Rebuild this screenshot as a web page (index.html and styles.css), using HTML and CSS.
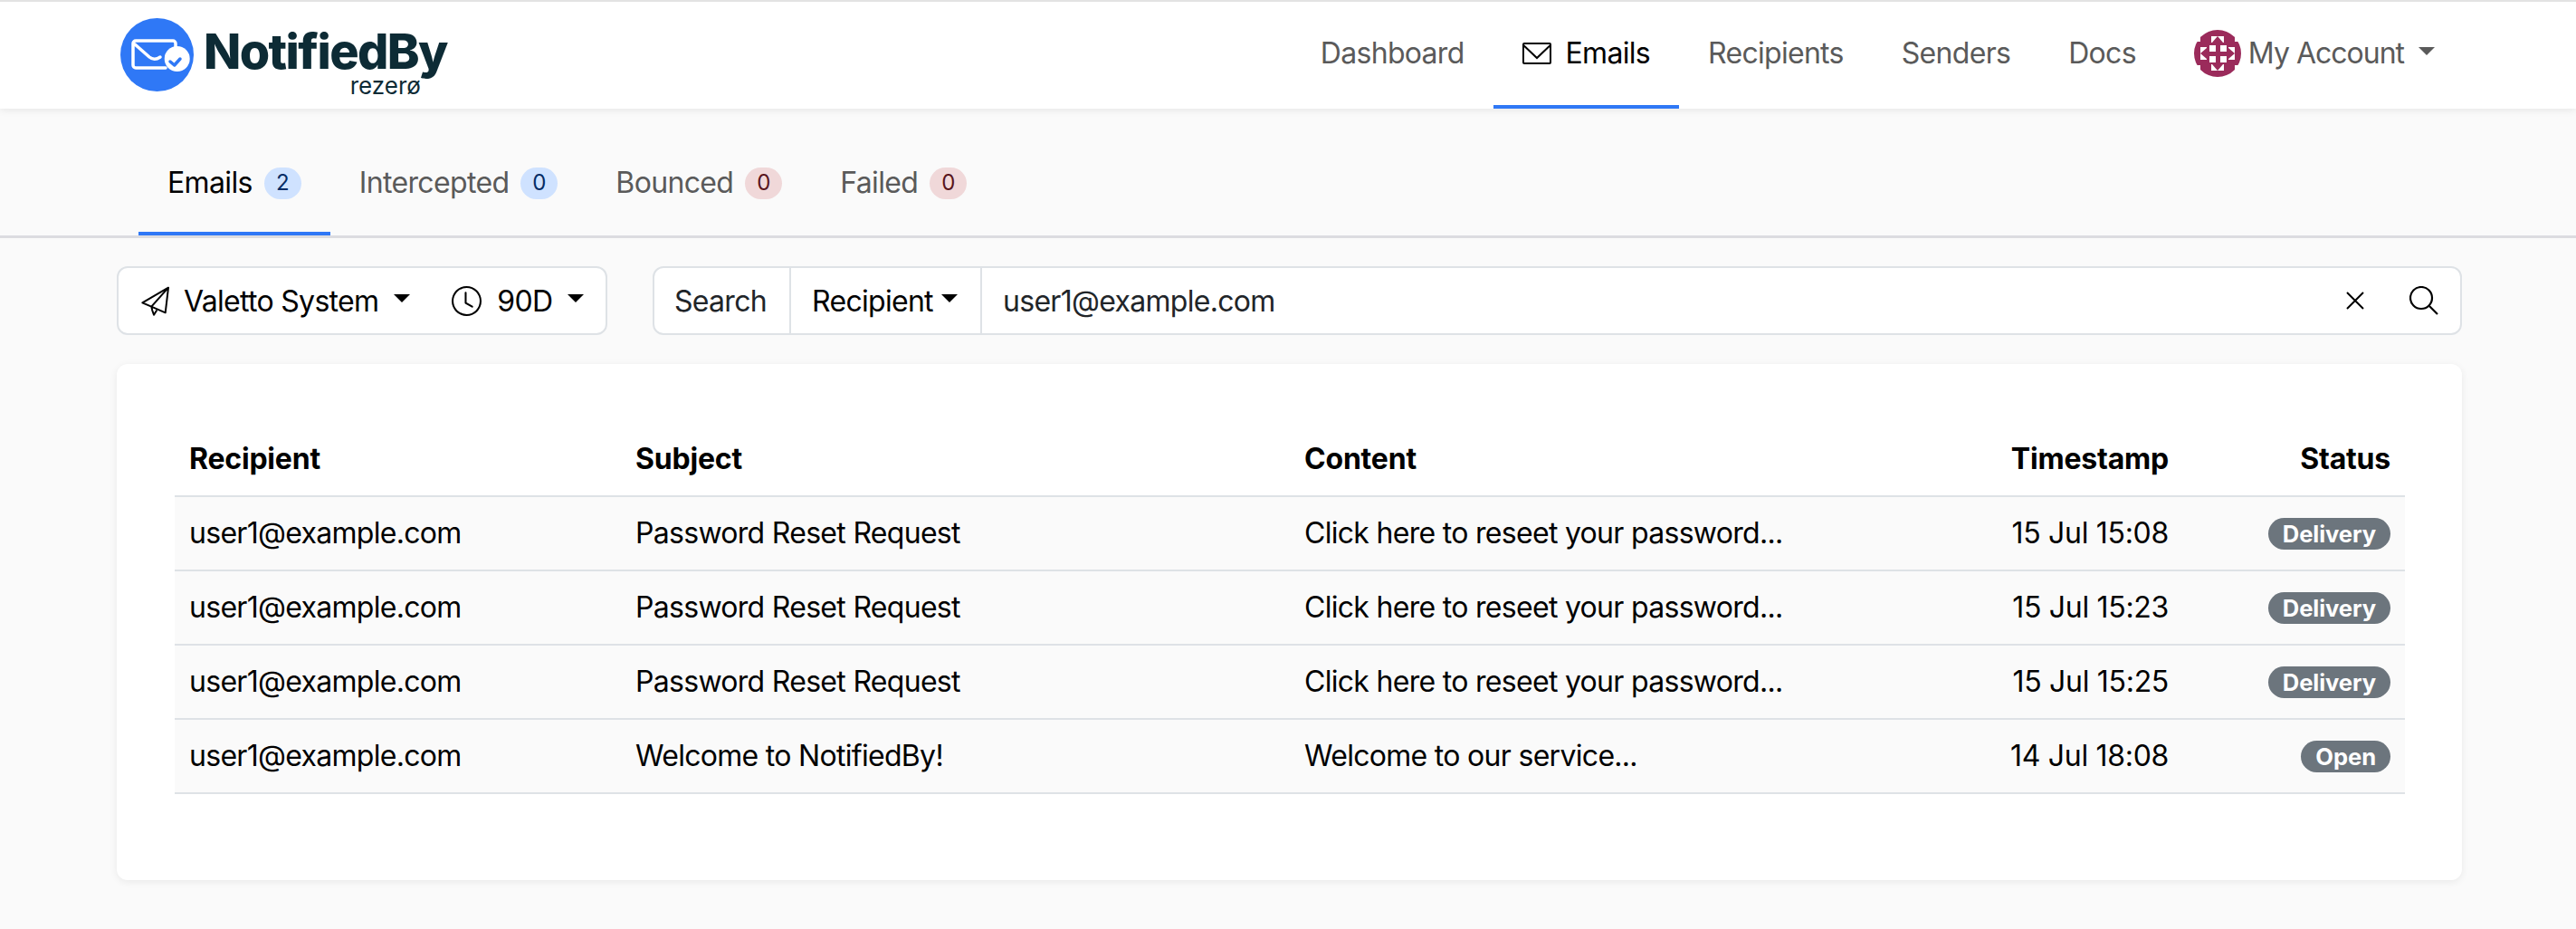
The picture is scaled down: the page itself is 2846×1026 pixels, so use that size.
FILE: index.html
```html
<!DOCTYPE html>
<html lang="en">
<head>
<meta charset="utf-8">
<title>NotifiedBy</title>
<link rel="stylesheet" href="styles.css">
</head>
<body>
<header class="navbar">
  <a class="brand">
    <svg class="brand-mark" viewBox="0 0 81 81">
      <circle cx="40.5" cy="40.5" r="40.5" fill="#2f78f6"/>
      <path d="M50 55H17a3 3 0 0 1-3-3V28a3 3 0 0 1 3-3h41a3 3 0 0 1 3 3v9M15.500 28.500L32 43c3 2.500 7 3.500 12 0" fill="none" stroke="#fff" stroke-width="3.500" stroke-linecap="round"/>
      <circle cx="62.700" cy="45" r="14" fill="#fff"/>
      <path d="M55 48l4.700 4 6.300-7" fill="none" stroke="#2f78f6" stroke-width="3.500" stroke-linecap="round" stroke-linejoin="round"/>
    </svg>
    <span class="brand-text">
      <span class="brand-name">NotifiedBy</span>
      <span class="brand-sub">rezerø</span>
    </span>
  </a>
  <nav class="nav-links">
    <a class="nav-link">Dashboard</a>
    <a class="nav-link nav-link-active">
      <svg class="nav-icon" viewBox="0 0 32 24" fill="none" stroke="currentColor" stroke-width="2"><rect x="1" y="1" width="30" height="22" rx="1"/><path d="M1.500 3.300L16 17 30.500 3.300"/></svg>
      Emails
    </a>
    <a class="nav-link">Recipients</a>
    <a class="nav-link">Senders</a>
    <a class="nav-link">Docs</a>
    <a class="nav-link nav-account">
      <svg class="avatar" viewBox="0 0 52 52">
        <circle cx="26" cy="26" r="26" fill="#9b2b5b"/>
        <g fill="#fff">
          <path d="M0 0h13v3H7v10H0zM52 0H39v3h6v10h7zM0 52h13v-3H7V39H0zM52 52H39v-3h6V39h7z"/>
          <rect x="17" y="17" width="7" height="7"/><rect x="29" y="17" width="7" height="7"/>
          <rect x="17" y="29" width="7" height="7"/><rect x="29" y="29" width="7" height="7"/>
          <rect x="19" y="7" width="14" height="7"/><rect x="19" y="38" width="14" height="7"/>
          <rect x="7" y="19" width="7" height="14"/><rect x="38" y="19" width="7" height="14"/>
        </g>
        <path d="M26 7l6 7H20zM26 45l6-7H20zM7 26l7-6v12zM45 26l-7-6v12z" fill="#9b2b5b"/>
      </svg>
      <span class="account-name">My Account</span><span class="caret caret-account"></span>
    </a>
  </nav>
</header>

<div class="tabs">
  <a class="tab tab-active">Emails<span class="count count-blue">2</span></a>
  <a class="tab">Intercepted<span class="count count-blue">0</span></a>
  <a class="tab">Bounced<span class="count count-red">0</span></a>
  <a class="tab">Failed<span class="count count-red">0</span></a>
</div>

<main class="content">
  <div class="toolbar">
    <div class="filters">
      <span class="filter">
        <svg class="plane-icon" viewBox="0 0 33 36" fill="none" stroke="#000" stroke-width="2" stroke-linejoin="round"><path d="M31 2.700L2.300 19.300l10 4.400 15.400 6.600zM31 2.700L12.300 23.700l1 4.300 1.700 4.700 3.300-5.200"/></svg>
        Valetto System<span class="caret"></span>
      </span>
      <span class="filter filter-time">
        <svg class="filter-icon" viewBox="0 0 16 16" fill="#000"><path d="M8 3.500a.5.5 0 0 0-1 0V9a.5.5 0 0 0 .252.434l3.500 2a.5.5 0 0 0 .496-.868L8 8.710z"/><path d="M8 16A8 8 0 1 0 8 0a8 8 0 0 0 0 16m7-8A7 7 0 1 1 1 8a7 7 0 0 1 14 0"/></svg>
        90D<span class="caret"></span>
      </span>
    </div>
    <div class="search">
      <span class="search-label">Search</span>
      <span class="search-field">Recipient<span class="caret caret-tight"></span></span>
      <span class="search-value">user1@example.com</span>
      <svg class="icon-clear" viewBox="0 0 20 20" fill="none" stroke="#000" stroke-width="2"><path d="M1 1l18 18M19 1L1 19"/></svg>
      <svg class="icon-search" viewBox="0 0 32 32" fill="none" stroke="#000" stroke-width="2.200"><circle cx="13" cy="13" r="12"/><path d="M22 22l9 9"/></svg>
    </div>
  </div>

  <section class="card">
    <table class="table">
      <colgroup>
        <col class="col-recipient"><col class="col-subject"><col class="col-content"><col class="col-time"><col class="col-status">
      </colgroup>
      <thead>
        <tr><th>Recipient</th><th>Subject</th><th>Content</th><th class="end">Timestamp</th><th class="end">Status</th></tr>
      </thead>
      <tbody>
        <tr><td>user1@example.com</td><td>Password Reset Request</td><td>Click here to reseet your password...</td><td class="end time">15 Jul 15:08</td><td class="end"><span class="status">Delivery</span></td></tr>
        <tr><td>user1@example.com</td><td>Password Reset Request</td><td>Click here to reseet your password...</td><td class="end time">15 Jul 15:23</td><td class="end"><span class="status">Delivery</span></td></tr>
        <tr><td>user1@example.com</td><td>Password Reset Request</td><td>Click here to reseet your password...</td><td class="end time">15 Jul 15:25</td><td class="end"><span class="status">Delivery</span></td></tr>
        <tr><td>user1@example.com</td><td>Welcome to NotifiedBy!</td><td>Welcome to our service...</td><td class="end time">14 Jul 18:08</td><td class="end"><span class="status">Open</span></td></tr>
      </tbody>
    </table>
  </section>
</main>
</body>
</html>
```

FILE: styles.css
```css
* { box-sizing: border-box; }
html, body { margin: 0; height: 100%; }
body {
  background: #fafafa;
  color: #000;
  font-family: Inter, "Liberation Sans", sans-serif;
  font-size: 32px;
  line-height: 48px;
  letter-spacing: -0.7px;
  overflow: hidden;
}
.navbar {
  height: 120px;
  border-top: 2px solid #e3e3e3;
  background: #fff;
  box-shadow: 0 2px 8px rgba(0, 0, 0, .08);
  display: flex;
  align-items: stretch;
  justify-content: space-between;
  padding: 0 156px 0 133px;
  position: relative;
}
.brand { display: flex; align-items: flex-start; padding-top: 18px; gap: 11px; }
.brand-mark { width: 81px; height: 81px; }
.brand-text { display: flex; flex-direction: column; align-items: flex-end; padding-top: 9px; }
.brand-name {
  font-weight: 800;
  font-size: 54px;
  line-height: 56px;
  letter-spacing: -1.6px;
  color: #0d2b35;
}
.brand-sub {
  font-size: 26px;
  line-height: 20px;
  letter-spacing: 0;
  margin-right: 29px;
  color: #0d2b35;
}
.nav-links { display: flex; align-items: stretch; }
.nav-link {
  display: flex;
  align-items: center;
  padding: 0 32px;
  color: #5a5a5a;
  border-bottom: 4px solid transparent;
}
.nav-link-active { color: #000; border-bottom-color: #2f78f6; }
.nav-icon { width: 32px; height: 24px; margin-right: 16px; }
.nav-account { padding-right: 0; }
.account-name { letter-spacing: -1px; }
.avatar { width: 52px; height: 52px; margin-right: 8px; }
.caret {
  display: inline-block;
  width: 0;
  height: 0;
  margin-left: 17px;
  border-top: 9px solid currentColor;
  border-left: 9px solid transparent;
  border-right: 9px solid transparent;
  position: relative;
  top: -3px;
}
.caret-account { margin-left: 16px; }
.caret-tight { margin-left: 9px; }

.tabs {
  height: 143px;
  border-bottom: 3px solid #dcdce0;
  display: flex;
  align-items: stretch;
  padding-left: 153px;
  letter-spacing: -0.65px;
}
.tab {
  display: flex;
  align-items: center;
  padding: 28px 32px 0;
  color: #5a5a5a;
  height: 140px;
  border-bottom: 4px solid transparent;
}
.tab-active { color: #000; border-bottom-color: #2f78f6; }
.count {
  width: 41px;
  height: 35px;
  margin-left: 13px;
  border-radius: 18px;
  display: flex;
  align-items: center;
  justify-content: center;
  font-size: 24px;
  line-height: 1;
  letter-spacing: 0;
}
.count-blue { background: #cfe2ff; color: #052c65; }
.count-red { background: #f0d8d9; color: #58151c; }

.content { padding: 31px 126px 0 129px; }
.toolbar { display: flex; gap: 50px; height: 76px; }
.filters, .search {
  display: flex;
  align-items: center;
  background: #fff;
  border: 2px solid #dee2e6;
  border-radius: 12px;
}
.filters { width: 542px; padding-left: 24px; padding-top: 1px; }
.filter { display: flex; align-items: center; }
.plane-icon { width: 33px; height: 36px; margin-right: 15px; }
.filter-icon { width: 33px; height: 33px; margin-right: 17px; }
.filter-time { margin-left: 46px; }
.search { flex: 1; padding-right: 24px; }
.search-label {
  width: 151px;
  height: 100%;
  display: flex;
  align-items: center;
  padding: 1px 0 0 22px;
  color: #212529;
  border-right: 2px solid #dee2e6;
}
.search-field {
  width: 211px;
  height: 100%;
  display: flex;
  align-items: center;
  padding: 1px 0 0 23px;
  border-right: 2px solid #dee2e6;
}
.search-value { flex: 1; padding: 1px 0 0 23px; color: #212529; }
.icon-clear { width: 20px; height: 20px; margin-right: 50px; }
.icon-search { width: 32px; height: 32px; }

.card {
  margin-top: 32px;
  height: 570px;
  padding: 64px;
  background: #fff;
  border-radius: 12px;
  box-shadow: 0 2px 8px rgba(0, 0, 0, .07);
}
.table { width: 2464px; border-collapse: collapse; table-layout: fixed; }
.col-recipient { width: 493px; }
.col-subject { width: 739px; }
.col-content { width: 780px; }
.col-time { width: 207px; }
.col-status { width: 245px; }
.table th, .table td {
  height: 82px;
  padding: 0 16px;
  text-align: left;
  white-space: nowrap;
  vertical-align: middle;
  border-bottom: 2px solid #dee2e6;
}
.table th { font-weight: 700; letter-spacing: -0.2px; }
.table td { background: #fafafa; font-weight: 400; }
.table .end { text-align: right; }
.table .time { letter-spacing: -0.3px; }
.status {
  display: inline-block;
  height: 35px;
  margin-bottom: 3px;
  padding: 0 16px;
  background: #6c757d;
  color: #fff;
  font-size: 25.6px;
  font-weight: 700;
  letter-spacing: -0.1px;
  line-height: 35px;
  border-radius: 18px;
  vertical-align: middle;
}
```
